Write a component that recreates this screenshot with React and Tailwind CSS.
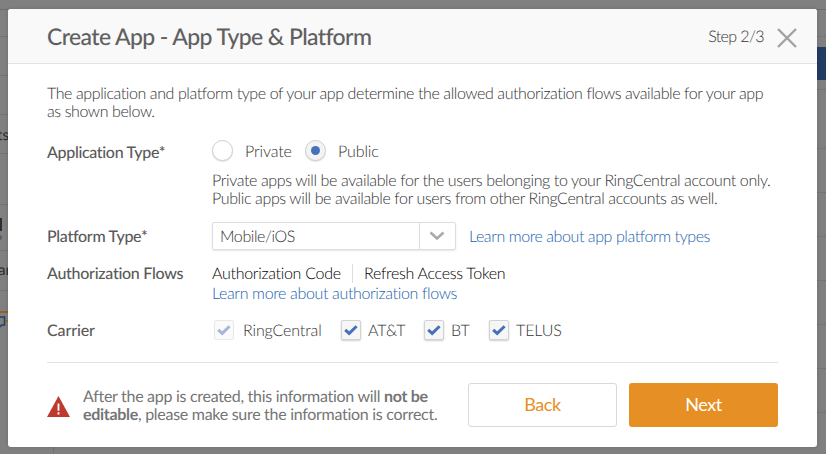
import React from "react";

function Check({ label, disabled, className }) {
  return (
    <label className={`flex items-center ${className}`}>
      <span
        className={`flex h-5 w-5 shrink-0 items-center justify-center rounded-[2px] border border-[#d3d3d3] bg-[#f6f6f6] ${
          disabled ? "opacity-50" : "shadow-[0_1px_2px_rgba(0,0,0,0.2)]"
        }`}
      >
        <svg width="14" height="12" viewBox="0 0 14 12" fill="none">
          <path d="M1.2 5.8L5.2 9.4L12.6 2.2" stroke="#4671b8" strokeWidth="2.9" />
        </svg>
      </span>
      <span className="whitespace-nowrap pt-[2px]">{label}</span>
    </label>
  );
}

function Radio({ checked }) {
  return (
    <span
      className={`flex h-[21px] w-[21px] shrink-0 items-center justify-center rounded-full border border-[#cfcfcf] shadow-[0_1px_1px_rgba(0,0,0,0.12)] ${
        checked ? "bg-[#f3f3f3]" : "bg-white"
      }`}
    >
      {checked && <span className="h-[9px] w-[9px] rounded-full bg-[#4671b8]" />}
    </span>
  );
}

function Backdrop() {
  return (
    <div className="flex h-[454px] w-full justify-between overflow-hidden bg-[#808080]">
      <div className="flex w-[54px] flex-col text-[15px] text-[#2d2d33]">
        <div className="h-[10px] shrink-0 border-b border-[#6c6c6c]" />
        <div className="h-[27px] shrink-0 border-b border-[#747474]" />
        <div className="h-[39px] shrink-0 border-b border-[#747474]" />
        <div className="h-[39px] shrink-0 border-b border-[#747474]" />
        <div className="flex h-[39px] shrink-0 items-center border-b border-[#747474] pt-[2px]">
          <span className="-ml-[3px]">ts</span>
        </div>
        <div className="h-[51px] shrink-0 border-b border-[#747474]" />
        <div className="h-[46px] shrink-0 border-b border-[#747474] pt-[13px]">
          <div className="h-[13px] w-[2px] bg-[#2d2d33]" />
          <div className="mt-[4px] h-[5px] w-[2px] rounded-r-full bg-[#52616f]" />
        </div>
        <div className="flex h-[40px] shrink-0 items-center border-b border-[#747474]">
          <span className="-ml-[2px]">ar</span>
        </div>
        <div className="h-[22px] shrink-0 border-b-2 border-[#8c6424]" />
        <div className="flex-1 border-r border-[#737373] pt-[2px]">
          <svg width="8" height="14" viewBox="0 0 8 14" fill="none">
            <path d="M0 2h4.5v8H1.5L0 12" stroke="#243e66" strokeWidth="1.5" />
            <path d="M5 6h3" stroke="#8c6424" strokeWidth="1.5" />
          </svg>
        </div>
      </div>
      <div className="flex w-[9px] flex-col">
        <div className="h-[10px] shrink-0 border-b border-[#6c6c6c]" />
        <div className="h-[27px] shrink-0 border-b border-[#747474]" />
        <div className="mt-[10px] h-[33px] shrink-0 bg-[#233c63]" />
        <div className="h-[10px] shrink-0 border-b border-[#747474]" />
        <div className="h-[59px] shrink-0 border-b border-[#747474]" />
        {[0, 1, 2, 3, 4, 5].map((i) => (
          <div key={i} className="h-[44px] shrink-0 border-b border-[#747474]" />
        ))}
      </div>
    </div>
  );
}

export default function App() {
  return (
    <div className="relative h-[454px] w-[826px] overflow-hidden font-['Lato',sans-serif] [font-variant-ligatures:none] [text-rendering:geometricPrecision]">
      <Backdrop />
      <div className="absolute left-[8px] top-[9px] flex h-[438px] w-[809px] flex-col rounded-[3px] bg-white text-[16px] font-light leading-[18px] tracking-[-0.41px] text-[#333] shadow-[0_0_4px_rgba(0,0,0,0.15)]">
        <header className="flex h-[55px] shrink-0 items-center rounded-t-[3px] border-b border-[#e3e3e3] bg-[#f9f9f9] pl-[39px] pr-[20px]">
          <h1 className="whitespace-nowrap text-[23px] font-medium leading-7 tracking-[-0.61px] text-[#606060]">Create App - App Type &amp; Platform</h1>
          <span className="ml-auto mr-[13px] whitespace-nowrap pt-[2px] tracking-[-0.6px]">Step 2/3</span>
          <svg className="mt-[3px]" width="20" height="20" viewBox="0 0 20 20" fill="none">
            <path d="M1 1L19 19M19 1L1 19" stroke="#a2a2a2" strokeWidth="2.4" />
          </svg>
        </header>

        <main className="flex flex-col pl-[39px] pr-[39px]">
          <p className="mt-[21px] whitespace-nowrap">
            The application and platform type of your app determine the allowed authorization flows available for your app
            <br />
            as shown below.
          </p>

          <div className="mt-[19px] flex">
            <div className="w-[165px] shrink-0 pt-[4px] font-medium tracking-[-0.33px] text-[#5a5a5a]">Application Type*</div>
            <div>
              <div className="flex h-[21px] items-center tracking-[-0.12px]">
                <Radio />
                <span className="ml-[12px] w-[60px] pt-[2px]">Private</span>
                <Radio checked />
                <span className="ml-[12px] pt-[2px]">Public</span>
              </div>
              <p className="mt-[11px] whitespace-nowrap tracking-[-0.38px]">
                Private apps will be available for the users belonging to your RingCentral account only.
                <br />
                Public apps will be available for users from other RingCentral accounts as well.
              </p>
            </div>
          </div>

          <div className="mt-[14px] flex h-[28px] items-center">
            <div className="w-[165px] shrink-0 pt-[2px] font-medium tracking-[-0.3px] text-[#5a5a5a]">Platform Type*</div>
            <div className="flex h-[28px] w-[244px] shrink-0 items-center rounded-[2px] border border-[#dedede] shadow-[0_1px_2px_rgba(0,0,0,0.1)]">
              <span className="flex-1 pl-[7px] pt-[2px]">Mobile/iOS</span>
              <span className="flex h-full w-[36px] items-center justify-center border-l border-[#dedede] pr-px">
                <svg width="16" height="10" viewBox="0 0 16 10" fill="none">
                  <path d="M1.5 1.5L8 7.5L14.5 1.5" stroke="#aaa" strokeWidth="2.6" />
                </svg>
              </span>
            </div>
            <a className="ml-[13px] whitespace-nowrap pt-[2px] tracking-[-0.42px] text-[#215fae]">Learn more about app platform types</a>
          </div>

          <div className="mt-[15px] flex">
            <div className="w-[165px] shrink-0 font-medium tracking-[-0.28px] text-[#5a5a5a]">Authorization Flows</div>
            <div>
              <div className="-mt-px flex whitespace-nowrap tracking-[-0.3px] text-black">
                <span className="w-[141px] border-r border-[#ddd] pt-px">Authorization Code</span>
                <span className="pl-[11px] pt-px">Refresh Access Token</span>
              </div>
              <a className="mt-[2px] block whitespace-nowrap tracking-[-0.35px] text-[#215fae]">Learn more about authorization flows</a>
            </div>
          </div>

          <div className="mt-[17px] flex h-[20px] items-center tracking-[-0.12px]">
            <div className="w-[167px] shrink-0 pt-[2px] font-medium text-[#5a5a5a]">Carrier</div>
            <Check label="RingCentral" disabled className="w-[127px] gap-[9px]" />
            <Check label="AT&amp;T" className="w-[83px] gap-[7px]" />
            <Check label="BT" className="w-[65px] gap-[7px]" />
            <Check label="TELUS" className="gap-[7px]" />
          </div>

          <div className="mt-[22px] h-px bg-[#e3e3e3]" />

          <div className="mt-[20px] flex h-[44px] items-center">
            <svg className="mt-[3px] shrink-0" width="23" height="21" viewBox="0 0 23 21">
              <path d="M11.5 0L23 21H0Z" fill="#bd3b2e" />
              <path d="M11.5 7.5V14.8M11.5 16.2V18.6" stroke="#fff" strokeWidth="1.8" />
            </svg>
            <p className="ml-[13px] w-[385px] whitespace-nowrap pt-[2px] font-normal tracking-[-0.29px] text-[#757575]">
              After the app is created, this information will <b>not be</b>
              <br />
              <b>editable</b>, please make sure the information is correct.
            </p>
            <button className="h-[44px] w-[149px] shrink-0 rounded-[3px] border border-[#d9d9d9] bg-white pb-[2px] text-[18px] font-normal text-[#e68f25]">Back</button>
            <button className="ml-[12px] h-[44px] w-[149px] shrink-0 rounded-[3px] bg-[#e68f25] pb-[2px] text-[18px] font-normal text-white">Next</button>
          </div>
        </main>
      </div>
    </div>
  );
}
